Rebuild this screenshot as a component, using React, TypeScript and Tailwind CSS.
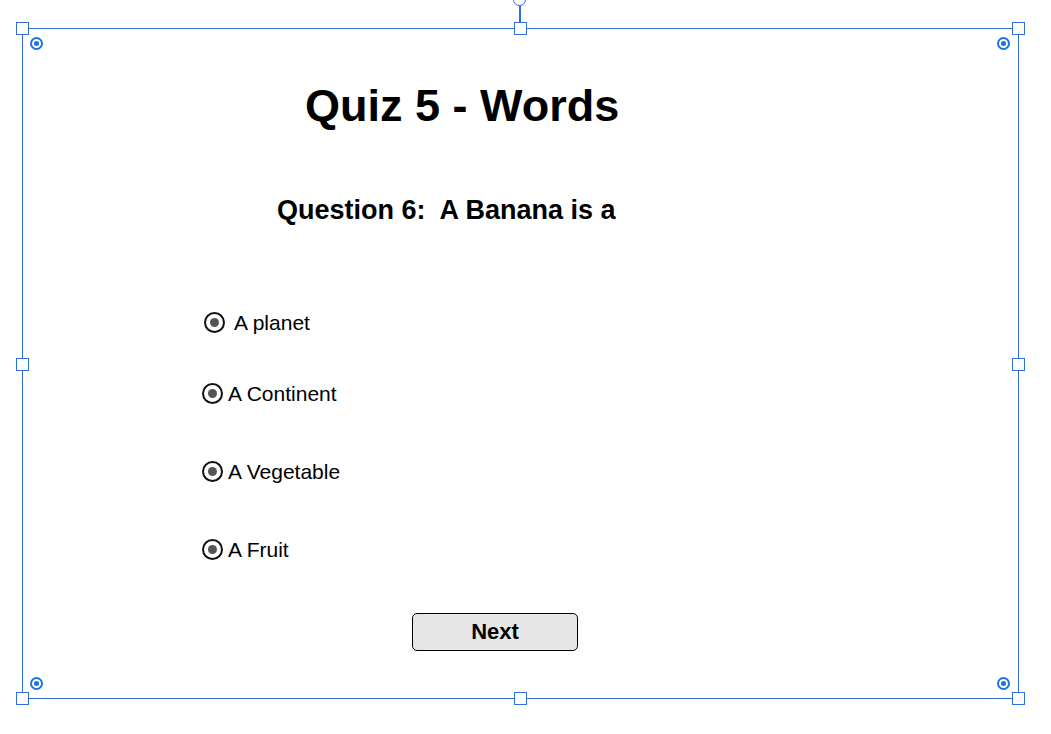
import React from 'react';

function Handle({ className }: { className: string }) {
  return <div className={`absolute w-[13px] h-[13px] bg-white border-[1.5px] border-[#2f6fdc] ${className}`} />;
}

function Pin({ className }: { className: string }) {
  return (
    <div className={`absolute w-[13px] h-[13px] rounded-full border-2 border-[#1a73e8] flex items-center justify-center ${className}`}>
      <div className="w-[5px] h-[5px] rounded-full bg-[#1a73e8]" />
    </div>
  );
}

function Radio() {
  return (
    <span className="inline-flex items-center justify-center w-[21px] h-[21px] rounded-full border-2 border-[#111]">
      <span className="w-[9px] h-[9px] rounded-full bg-[#555]" />
    </span>
  );
}

const options = [
  { label: 'A planet', top: 'mt-[88px]', gap: 'ml-[9px]', x: 'ml-[181px]' },
  { label: 'A Continent', top: 'mt-[50px]', gap: 'ml-[5px]', x: 'ml-[179px]' },
  { label: 'A Vegetable', top: 'mt-[57px]', gap: 'ml-[5px]', x: 'ml-[179px]' },
  { label: 'A Fruit', top: 'mt-[57px]', gap: 'ml-[5px]', x: 'ml-[179px]' },
];

export default function App() {
  return (
    <div className="relative w-[1051px] h-[734px] bg-white overflow-hidden" style={{ fontFamily: '"Liberation Sans", Arial, sans-serif' }}>
      <div className="ml-[22px] mt-[28px] w-[997px] h-[671px] border-[1.5px] border-[#2f6fdc] text-black">
        <h1 className="ml-[282px] mt-[54px] text-[45px] font-bold leading-none">Quiz 5 - Words</h1>
        <h2 className="ml-[254px] mt-[69px] text-[27px] font-bold leading-none whitespace-pre">Question 6:  A Banana is a</h2>

        <div className="flex flex-col">
          {options.map((o) => (
            <label key={o.label} className={`flex items-center ${o.top} ${o.x} text-[21px] leading-none`}>
              <Radio />
              <span className={o.gap}>{o.label}</span>
            </label>
          ))}
        </div>

        <div className="mt-[53px] ml-[389px]">
          <button className="w-[166px] h-[38px] rounded-[5px] border border-black bg-[#e6e6e6] text-[22px] font-bold leading-none">
            Next
          </button>
        </div>
      </div>

      {/* selection handles */}
      <div className="absolute left-[519px] top-[4px] w-[1.5px] h-[20px] bg-[#2f6fdc]" />
      <div className="absolute left-[513px] top-[-7px] w-[13px] h-[13px] rounded-full bg-white border-[1.5px] border-[#2f6fdc]" />
      <Handle className="left-[16px] top-[22px]" />
      <Handle className="left-[514px] top-[22px]" />
      <Handle className="left-[1012px] top-[22px]" />
      <Handle className="left-[16px] top-[358px]" />
      <Handle className="left-[1012px] top-[358px]" />
      <Handle className="left-[16px] top-[692px]" />
      <Handle className="left-[514px] top-[692px]" />
      <Handle className="left-[1012px] top-[692px]" />

      <Pin className="left-[30px] top-[37px]" />
      <Pin className="left-[997px] top-[37px]" />
      <Pin className="left-[30px] top-[677px]" />
      <Pin className="left-[997px] top-[677px]" />
    </div>
  );
}
